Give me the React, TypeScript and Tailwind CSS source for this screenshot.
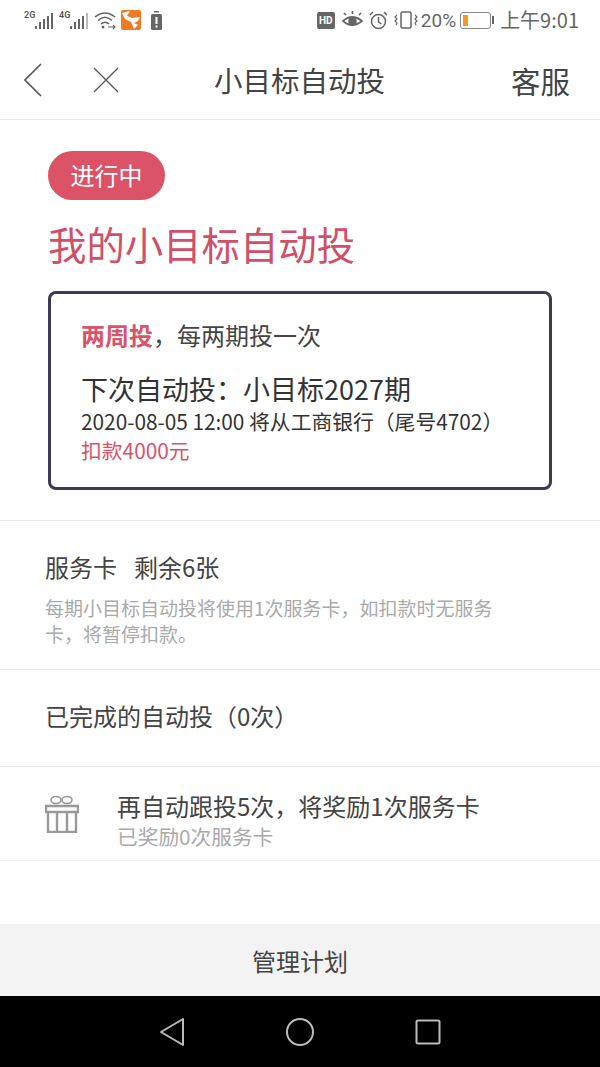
const cjk = { fontFamily: '"Noto Sans CJK SC", "Noto Sans", sans-serif' };

function Signal({ label, dim }: { label: string; dim?: boolean }) {
  return (
    <div className="flex items-end w-[35px] h-[20px]">
      <span className="text-[9px] leading-[9px] self-start mt-[1px] text-[#555] font-semibold font-['Roboto'] w-[11px]">{label}</span>
      <svg width="20" height="18" viewBox="0 0 20 18" className="ml-[-1px]">
        <rect x="1" y="14" width="2" height="3" fill="#666" />
        <rect x="5" y="10" width="2" height="7" fill="#666" />
        <rect x="9" y="7" width="2" height="10" fill="#666" />
        <rect x="13" y="4" width="2" height="13" fill="#666" />
        <rect x="17" y="1" width="2" height="16" fill={dim ? '#bbb' : '#666'} />
      </svg>
    </div>
  );
}

function StatusBar() {
  return (
    <div className="h-[40px] flex items-center justify-between pl-[24px] pr-[21px] bg-white">
      <div className="flex items-center">
        <Signal label="2G" />
        <Signal label="4G" dim />
        <svg width="23" height="20" viewBox="0 0 23 20" fill="none" stroke="#666" strokeWidth="1.6">
          <path d="M1 7 Q11 -1 21 7" />
          <path d="M4 10.5 Q11 4 18 10.5" />
          <path d="M7 14 Q11 10.5 15 14" />
          <circle cx="9" cy="17" r="1.5" fill="#666" stroke="none" />
          <path d="M14 17h7M19 15l2 2-2 2" strokeWidth="1.1" />
        </svg>
        <svg width="20" height="20" viewBox="0 0 20 20" className="ml-[4px]">
          <rect width="20" height="20" rx="2" fill="#ee7a24" />
          <path d="M1 3 L9 1 L6 6 L11 8 L19 7 L17 11 L13 13 L17 15 L13 19 L10 12 L4 9 Z" fill="#fff" />
        </svg>
        <svg width="11" height="19" viewBox="0 0 11 19" className="ml-[10px]">
          <rect x="3" y="0" width="5" height="1.5" fill="#666" />
          <rect x="0" y="3" width="11" height="16" rx="1.5" fill="#666" />
          <rect x="4.5" y="6" width="2" height="7" fill="#fff" />
          <rect x="4.5" y="14.5" width="2" height="2" fill="#fff" />
        </svg>
      </div>
      <div className="flex items-center text-[#666]">
        <span className="w-[18px] h-[17px] bg-[#666] rounded-[2px] text-white text-[10px] leading-[17px] text-center font-bold font-['Roboto']">HD</span>
        <svg width="21" height="18" viewBox="0 0 21 18" className="ml-[7px]" fill="none" stroke="#666" strokeWidth="1.7">
          <path d="M1 10 Q10 2 20 10 Q10 18 1 10Z" />
          <circle cx="10.5" cy="10" r="3.4" fill="#666" />
          <path d="M4 4 2 2M10.5 3V0M17 4l2-2" />
        </svg>
        <svg width="19" height="19" viewBox="0 0 19 19" className="ml-[6px]" fill="none" stroke="#666" strokeWidth="1.5">
          <circle cx="9.5" cy="10.5" r="7" />
          <path d="M9.5 6v5l3 2M1 4l3-3M18 4l-3-3" />
        </svg>
        <svg width="24" height="18" viewBox="0 0 24 18" className="ml-[6px]" fill="none" stroke="#666" strokeWidth="1.5">
          <rect x="7" y="1" width="10" height="16" rx="1.5" />
          <path d="M3 4l-2 2 2 2-2 2 2 2 -1 2M21 4l2 2-2 2 2 2-2 2 1 2" strokeWidth="1.2" />
        </svg>
        <span className="ml-[3px] text-[19px] leading-none font-['Roboto'] text-[#666]">20%</span>
        <div className="ml-[4px] w-[31px] h-[17px] border border-[#888] rounded-[3px] p-[2px]">
          <div className="w-[5px] h-full bg-[#f39c1f]" />
        </div>
        <div className="w-[2px] h-[8px] bg-[#666] ml-[1px]" />
        <span className="ml-[6px] text-[20px] leading-none text-[#666]">上午9:01</span>
      </div>
    </div>
  );
}

function NavBar() {
  return (
    <div className="h-[80px] flex items-center pl-[24px] pr-[30px] border-b border-[#e8e8e8] bg-white">
      <svg width="18" height="34" viewBox="0 0 18 34" fill="none" stroke="#555" strokeWidth="1.6">
        <path d="M17 1 1 17l16 16" />
      </svg>
      <svg width="26" height="26" viewBox="0 0 26 26" className="ml-[51px]" fill="none" stroke="#555" strokeWidth="1.3">
        <path d="M1 1l24 24M25 1 1 25" />
      </svg>
      <span className="ml-[95px] mt-[2px] text-[28.5px] leading-none text-[#444]">小目标自动投</span>
      <span className="ml-auto mt-[2px] text-[29.5px] leading-none text-[#444]">客服</span>
    </div>
  );
}

function PlanCard() {
  return (
    <div className="mt-[23px] ml-[48px] w-[504px] h-[199px] border-[3px] border-[#3c3a52] rounded-[8px] pl-[30px] pt-[25px]">
      <p className="text-[24px] leading-[32px] text-[#444]">
        <span className="font-bold text-[#d9536a]">两周投</span>，每两期投一次
      </p>
      <p className="mt-[22px] text-[27px] leading-[32px] text-[#333]">下次自动投：小目标2027期</p>
      <p className="mt-[1px] text-[20.8px] leading-[30px] text-[#333]">2020-08-05 12:00 将从工商银行（尾号4702）</p>
      <p className="text-[20.8px] leading-[28px] text-[#d9536a]">扣款4000元</p>
    </div>
  );
}

function Gift() {
  return (
    <svg width="34" height="38" viewBox="0 0 34 38" fill="none" stroke="#999" strokeWidth="2.4">
      <ellipse cx="11" cy="5" rx="5" ry="3.5" strokeWidth="1.6" />
      <ellipse cx="22" cy="5" rx="5" ry="3.5" strokeWidth="1.6" />
      <path d="M1 11h32v6H1zM3 17h28v20H3zM12 17v20M22 17v20" />
    </svg>
  );
}

export default function App() {
  return (
    <div className="w-[600px] h-[1067px] flex flex-col bg-white overflow-hidden" style={cjk}>
      <StatusBar />
      <NavBar />
      <div className="flex-1">
        <div className="pt-[31px] h-[401px] border-b border-[#e8e8e8]">
          <div className="ml-[48px] w-[117px] h-[49px] rounded-full bg-[#dc5266] text-white text-[24px] leading-[47px] text-center">进行中</div>
          <h1 className="mt-[18px] ml-[48px] text-[38.4px] leading-[50px] text-[#cf5068]">我的小目标自动投</h1>
          <PlanCard />
        </div>
        <div className="h-[149px] border-b border-[#e8e8e8] pl-[45px] pt-[28px]">
          <p className="text-[24px] leading-[36px] text-[#444]">服务卡<span className="ml-[17px]">剩余6张</span></p>
          <p className="mt-[10px] w-[460px] text-[19px] leading-[26px] text-[#aaa]">每期小目标自动投将使用1次服务卡，如扣款时无服务卡，将暂停扣款。</p>
        </div>
        <div className="h-[97px] border-b border-[#e8e8e8] pl-[45px] pb-[4px] flex items-center">
          <p className="text-[24px] text-[#444]">已完成的自动投（0次）</p>
        </div>
        <div className="h-[94px] border-b border-[#eeeeee] flex items-center pl-[45px]">
          <Gift />
          <div className="ml-[38px] mt-[11px]">
            <p className="text-[24px] leading-[34px] text-[#444]">再自动跟投5次，将奖励1次服务卡</p>
            <p className="text-[20.7px] leading-[26px] text-[#aaa]">已奖励0次服务卡</p>
          </div>
        </div>
      </div>
      <div className="h-[72px] bg-[#f3f3f3] text-[24px] leading-[74px] text-center text-[#444]">管理计划</div>
      <div className="h-[71px] bg-black flex items-center justify-center">
        <svg width="26" height="30" viewBox="0 0 26 30" fill="none" stroke="#bbb" strokeWidth="2" strokeLinejoin="round" className="mt-[1px]">
          <path d="M24 2v26L2 15z" />
        </svg>
        <svg width="30" height="30" viewBox="0 0 30 30" fill="none" stroke="#bbb" strokeWidth="2" className="ml-[100px] mt-[1px]">
          <circle cx="15" cy="15" r="13" />
        </svg>
        <svg width="26" height="26" viewBox="0 0 26 26" fill="none" stroke="#bbb" strokeWidth="2" className="ml-[100px] mt-[1px]">
          <rect x="1.5" y="1.5" width="23" height="23" rx="1.5" />
        </svg>
      </div>
    </div>
  );
}
